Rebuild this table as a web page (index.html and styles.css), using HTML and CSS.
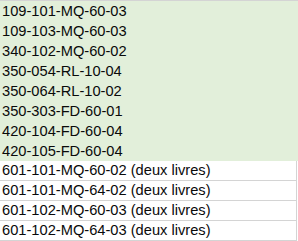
FILE: index.html
```html
<!DOCTYPE html>
<html lang="fr">
<head>
<meta charset="utf-8">
<title>Liste</title>
<link rel="stylesheet" href="styles.css">
</head>
<body>
<div class="sheet">
  <div class="row good">109-101-MQ-60-03</div>
  <div class="row good">109-103-MQ-60-03</div>
  <div class="row good">340-102-MQ-60-02</div>
  <div class="row good">350-054-RL-10-04</div>
  <div class="row good">350-064-RL-10-02</div>
  <div class="row good">350-303-FD-60-01</div>
  <div class="row good">420-104-FD-60-04</div>
  <div class="row good">420-105-FD-60-04</div>
  <div class="row plain">601-101-MQ-60-02 (deux livres)</div>
  <div class="row plain">601-101-MQ-64-02 (deux livres)</div>
  <div class="row plain">601-102-MQ-60-03 (deux livres)</div>
  <div class="row plain">601-102-MQ-64-03 (deux livres)</div>
</div>
</body>
</html>
```

FILE: styles.css
```css
html, body {
  margin: 0;
  padding: 0;
  background: #ffffff;
}
.sheet {
  display: flex;
  flex-direction: column;
  width: 298px;
  border-top: 1px solid #d4d4d4;
  font-family: "Liberation Sans", Arial, sans-serif;
  font-size: 14.67px;
  color: #0a0a0a;
}
.row {
  box-sizing: border-box;
  height: 20px;
  line-height: 20px;
  padding-left: 2px;
  white-space: nowrap;
  overflow: hidden;
}
.good {
  background: #e2efda;
}
.plain {
  width: 297px;
  background: #ffffff;
  border-bottom: 1px solid #d4d4d4;
  border-right: 1px solid #d4d4d4;
  line-height: 19px;
}
```
